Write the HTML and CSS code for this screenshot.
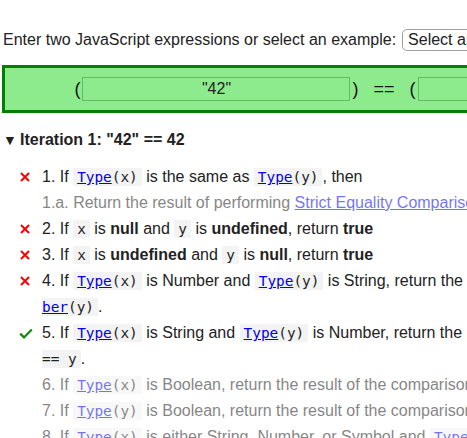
FILE: index.html
```html
<!DOCTYPE html>
<html>
<head>
<meta charset="utf-8">
<link rel="stylesheet" href="styles.css">
</head>
<body>
<div class="page">
  <div class="intro">
    <span>Enter two JavaScript expressions or select an example:</span>
    <select class="examples"><option>Select an example...</option></select>
  </div>
  <div class="expr-box">
    <span class="paren open">(</span><input class="expr" value="&quot;42&quot;"><span class="paren close">)</span>
    <span class="op">==</span>
    <span class="paren open">(</span><input class="expr" value="42"><span class="paren close">)</span>
  </div>
  <div class="iteration">
    <div class="summary"><span class="tri">▼</span>Iteration 1: "42" == 42</div>
    <ul class="steps">
      <li class="step"><span class="mark"><svg class="cross" width="10" height="10" viewBox="0 0 10 10"><path d="M1 1L9 9M9 1L1 9"/></svg></span><span class="txt">1. If <code><a href="#">Type</a>(x)</code> is the same as <code><a href="#">Type</a>(y)</code>, then</span></li>
      <li class="step dim"><span class="mark"></span><span class="txt">1.a. Return the result of performing <a href="#">Strict Equality Comparison</a> <code>x === y</code>.</span></li>
      <li class="step"><span class="mark"><svg class="cross" width="10" height="10" viewBox="0 0 10 10"><path d="M1 1L9 9M9 1L1 9"/></svg></span><span class="txt">2. If <code>x</code> is <b>null</b> and <code>y</code> is <b>undefined</b>, return <b>true</b></span></li>
      <li class="step"><span class="mark"><svg class="cross" width="10" height="10" viewBox="0 0 10 10"><path d="M1 1L9 9M9 1L1 9"/></svg></span><span class="txt">3. If <code>x</code> is <b>undefined</b> and <code>y</code> is <b>null</b>, return <b>true</b></span></li>
      <li class="step"><span class="mark"><svg class="cross" width="10" height="10" viewBox="0 0 10 10"><path d="M1 1L9 9M9 1L1 9"/></svg></span><span class="txt">4. If <code><a href="#">Type</a>(x)</code> is Number and <code><a href="#">Type</a>(y)</code> is String, return the result of the comparison <code>x == <a href="#">ToNumber</a>(y)</code>.</span></li>
      <li class="step"><span class="mark"><svg class="check" width="14" height="11" viewBox="0 0 14 11"><path d="M1.2 5.6L5 9.4L12.8 1.4"/></svg></span><span class="txt">5. If <code><a href="#">Type</a>(x)</code> is String and <code><a href="#">Type</a>(y)</code> is Number, return the result of the comparison <code><a href="#">ToNumber</a>(x) == y</code>.</span></li>
      <li class="step dim"><span class="mark"></span><span class="txt">6. If <code><a href="#">Type</a>(x)</code> is Boolean, return the result of the comparison <code><a href="#">ToNumber</a>(x) == y</code>.</span></li>
      <li class="step dim"><span class="mark"></span><span class="txt">7. If <code><a href="#">Type</a>(y)</code> is Boolean, return the result of the comparison <code>x == <a href="#">ToNumber</a>(y)</code>.</span></li>
      <li class="step dim"><span class="mark"></span><span class="txt">8. If <code><a href="#">Type</a>(x)</code> is either String, Number, or Symbol and <code><a href="#">Type</a>(y)</code> is Object, return the result of the comparison <code>x == <a href="#">ToPrimitive</a>(y)</code>.</span></li>
    </ul>
  </div>
</div>
</body>
</html>
```
FILE: styles.css
```css
html, body {
  margin: 0;
  padding: 0;
  background: #fff;
}
body {
  font-family: "Liberation Sans", Arial, sans-serif;
  font-size: 16px;
  color: #222;
  overflow: hidden;
}
.page {
  width: 770px;
  padding-left: 2px;
}
.intro {
  display: flex;
  align-items: center;
  height: 22px;
  margin-top: 29px;
  padding-left: 1px;
  white-space: nowrap;
}
.examples {
  -webkit-appearance: none;
  appearance: none;
  margin-left: 6px;
  height: 22px;
  box-sizing: border-box;
  padding: 0 6px 0 5px;
  border: 1px solid #a0a0a0;
  border-radius: 5px;
  background: #fff;
  color: #222;
  font-family: "Liberation Sans", Arial, sans-serif;
  font-size: 16px;
  line-height: 20px;
}
.expr-box {
  margin-top: 14px;
  width: 764px;
  box-sizing: border-box;
  height: 48px;
  border: 3px solid #008000;
  background: #8deb8d;
  display: flex;
  align-items: center;
  justify-content: center;
  font-size: 18px;
}
.paren {
  color: #111;
}
.paren.open {
  margin-right: 2px;
}
.paren.close {
  margin-left: 2px;
}
.op {
  margin: 0 15px;
  color: #111;
}
.expr {
  box-sizing: border-box;
  width: 268px;
  height: 24px;
  border: 1px solid #64bb64;
  background: transparent;
  text-align: center;
  font-family: "Liberation Sans", Arial, sans-serif;
  font-size: 16px;
  color: #222;
  padding: 0;
  outline: none;
}
.summary {
  margin-top: 16px;
  font-weight: bold;
  line-height: 22px;
  display: flex;
  align-items: center;
}
.tri {
  display: inline-block;
  width: 17px;
  padding-left: 1px;
  font-size: 14px;
}
.steps {
  list-style: none;
  width: 723.5px;
  margin: 13px 0 0;
  padding: 0 0 0 16px;
}
.step {
  display: grid;
  grid-template-columns: 24px 1fr;
  line-height: 26px;
}
.mark {
  display: flex;
  align-items: center;
  height: 26px;
  padding-left: 2px;
}
.cross path {
  fill: none;
  stroke: #ff0000;
  stroke-width: 2;
}
.check {
  margin-left: -1px;
}
.check path {
  fill: none;
  stroke: #118811;
  stroke-width: 2.2;
}
.step.dim .txt {
  opacity: 0.55;
}
a {
  color: #0000ee;
  text-decoration: underline;
}
code {
  font-family: "DejaVu Sans Mono", "Liberation Mono", monospace;
  font-size: 14.4px;
  background: #f3f3f3;
  padding: 1px 4px;
  word-break: break-all;
}
b {
  font-weight: bold;
}
```
